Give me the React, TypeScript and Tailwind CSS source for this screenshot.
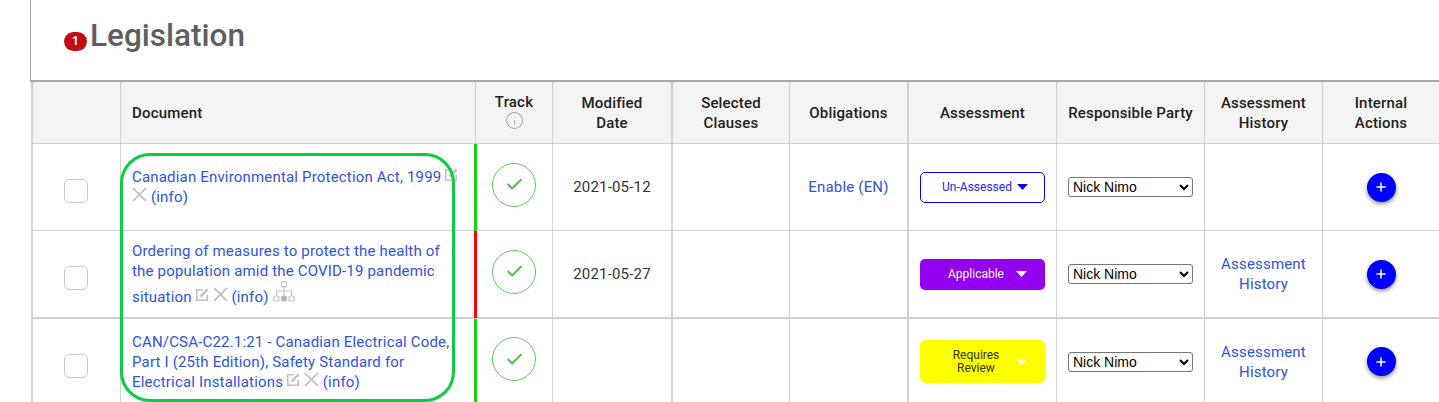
import { Check, Info, Plus } from "lucide-react";

const headers = [
  { label: "", cls: "" },
  { label: "Document", cls: "text-left pl-[11px]" },
  { label: "Track", cls: "pb-[3px]" },
  { label: "Modified Date", cls: "border-r-2 px-[12px]" },
  { label: "Selected Clauses", cls: "" },
  { label: "Obligations", cls: "border-r-2" },
  { label: "Assessment", cls: "" },
  { label: "Responsible Party", cls: "" },
  { label: "Assessment History", cls: "" },
  { label: "Internal Actions", cls: "border-r-0" },
];

function EditIcon() {
  return (
    <svg className="inline-block align-baseline -ml-[1px]" width="14" height="14" viewBox="0 0 14 14" fill="none" stroke="#c2c2c2">
      <path d="M8 1.75H1.75V12.25H12.25V6.5" strokeWidth="1.6" />
      <path d="M5.5 8.7L12.6 1.4" strokeWidth="2.4" />
    </svg>
  );
}

function CloseIcon() {
  return (
    <svg className="inline-block align-baseline" width="15" height="15" viewBox="0 0 15 15" fill="none" stroke="#bdbdbd" strokeWidth="1.7">
      <path d="M1 1L14 14M14 1L1 14" />
    </svg>
  );
}

function TreeIcon() {
  return (
    <svg className="inline-block align-baseline" width="22" height="21" viewBox="0 0 22 21" fill="none" stroke="#c4c4c4" strokeWidth="1.2">
      <rect x="8.5" y="0.6" width="5" height="5" rx="1" />
      <path d="M11 5.6V10M3.5 14.5V10H18.5V14.5M11 10V14.5" />
      <rect x="1" y="15" width="5" height="5" rx="1.2" />
      <rect x="8.5" y="15" width="5" height="5" rx="1" fill="#b5b5b5" />
      <rect x="16" y="15" width="5" height="5" rx="1.2" />
    </svg>
  );
}

function Caret({ color }: { color: string }) {
  return (
    <svg width="11" height="6" viewBox="0 0 11 6" className="shrink-0">
      <path d="M0 0H11L5.5 6Z" fill={color} />
    </svg>
  );
}

function AssessmentButton({ label, cls, caret, tall }: { label: string; cls: string; caret: string; tall?: boolean }) {
  return (
    <div className={`mx-auto w-[125px] rounded-[5px] flex items-center text-[12px] leading-[13px] tracking-normal ${tall ? "h-[43px]" : "h-[31px]"} ${cls}`}>
      <span className="w-[96px] pl-[16px] text-center">{label}</span>
      <Caret color={caret} />
    </div>
  );
}

function PartySelect() {
  return (
    <select
      defaultValue="Nick Nimo"
      className="block mx-auto w-[125px] h-[20px] border border-[#767676] rounded-[3px] bg-white text-black text-[14px] tracking-normal font-['Liberation_Sans',sans-serif]"
    >
      <option>Nick Nimo</option>
    </select>
  );
}

function AddButton() {
  return (
    <div className="mx-auto w-[29px] h-[29px] rounded-full bg-[#0000ff] flex items-center justify-center shadow-[0_2px_4px_rgba(0,0,0,0.45)]">
      <Plus className="w-[14px] h-[14px] text-white" strokeWidth={2.6} />
    </div>
  );
}

function Row({
  doc,
  bar,
  date,
  obligations,
  history,
  assessment,
  height,
  bottom = "border-b",
}: {
  doc: React.ReactNode;
  bar: string;
  date?: string;
  obligations?: string;
  history?: boolean;
  assessment: React.ReactNode;
  height: string;
  bottom?: string;
}) {
  const cell = `border-r ${bottom} border-[#d0d0d0] text-center align-middle`;
  return (
    <tr className={height}>
      <td className={`${cell} border-l-2`}>
        <div className="ml-[31px] mt-[8px] w-[24px] h-[24px] rounded-[5px] border border-[#cccccc] bg-white" />
      </td>
      <td className={`${cell} text-left pl-[11px] pr-[14px] text-[#2f52e4]`}>{doc}</td>
      <td className={`${cell} relative`}>
        <span className={`absolute left-[-2px] top-0 bottom-[-1px] w-[3px] ${bar}`} />
        <div className="mx-auto mb-[5px] w-[44px] h-[44px] rounded-full border border-[#63c663] flex items-center justify-center">
          <Check className="w-[19px] h-[19px] text-[#4ec04f]" strokeWidth={2.5} />
        </div>
      </td>
      <td className={`${cell} border-r-2 text-[#333333]`}>{date}</td>
      <td className={cell} />
      <td className={`${cell} border-r-2 text-[#2f52e4]`}>{obligations}</td>
      <td className={cell}>{assessment}</td>
      <td className={cell}>
        <PartySelect />
      </td>
      <td className={`${cell} text-[#2f52e4]`}>
        {history && (
          <>
            Assessment
            <br />
            History
          </>
        )}
      </td>
      <td className={`${cell} border-r-0`}>
        <AddButton />
      </td>
    </tr>
  );
}

export default function App() {
  return (
    <div className="relative w-[1439px] h-[402px] overflow-hidden bg-white font-['Roboto',sans-serif] text-[15px] leading-[20px] tracking-[0.18px]">
      <div className="ml-[30px] h-[82px] border-l border-b-2 border-[#a8a8a8] flex items-start pl-[33px] pt-[16px]">
        <span className="mt-[16px] w-[23px] h-[19px] rounded-full bg-[#c20c12] text-white text-[12px] leading-[19px] font-bold text-center tracking-normal">
          1
        </span>
        <h1 className="ml-[3px] text-[31.5px] leading-[40px] font-medium tracking-normal text-[#5f5f5f]">Legislation</h1>
      </div>
      <table className="ml-[31px] w-[1408px] table-fixed border-separate border-spacing-0">
        <colgroup>
          <col className="w-[90px]" />
          <col className="w-[355px]" />
          <col className="w-[77px]" />
          <col className="w-[120px]" />
          <col className="w-[117px]" />
          <col className="w-[119px]" />
          <col className="w-[148px]" />
          <col className="w-[148px]" />
          <col className="w-[118px]" />
          <col className="w-[116px]" />
        </colgroup>
        <thead>
          <tr className="h-[62px] bg-[#f4f4f4]">
            {headers.map((h, i) => (
              <th
                key={i}
                className={`border-r border-b border-[#d0d0d0] px-[10px] font-medium text-[#212121] text-center ${i === 0 ? "border-l-2" : ""} ${h.cls}`}
              >
                {h.label}
                {h.label === "Track" && <Info className="mx-auto -mt-[1px] w-[19px] h-[19px] text-[#a8a8a8]" strokeWidth={1.3} />}
              </th>
            ))}
          </tr>
        </thead>
        <tbody>
          <Row
            height="h-[87px]"
            bar="bg-[#0fd60f]"
            date="2021-05-12"
            obligations="Enable (EN)"
            assessment={<AssessmentButton label="Un-Assessed" cls="border border-[#0000ff] text-[#2424f0]" caret="#0000ff" />}
            doc={
              <>
                Canadian Environmental Protection Act, 1999 <EditIcon /> <CloseIcon /> (info)
              </>
            }
          />
          <Row
            height="h-[88px]"
            bottom="border-b-2"
            bar="bg-[#ff0000]"
            date="2021-05-27"
            history
            assessment={<AssessmentButton label="Applicable" cls="bg-[#9400ee] text-white" caret="#ffffff" />}
            doc={
              <>
                Ordering of measures to protect the health of the population amid the COVID-19 pandemic situation <EditIcon />{" "}
                <CloseIcon /> (info) <TreeIcon />
              </>
            }
          />
          <Row
            height="h-[86px]"
            bar="bg-[#0fd60f]"
            history
            assessment={<AssessmentButton label="Requires Review" tall cls="bg-[#ffff00] text-[#333300]" caret="#ffffff" />}
            doc={
              <>
                CAN/CSA-C22.1:21 - Canadian Electrical Code, Part I (25th Edition), Safety Standard for Electrical Installations{" "}
                <EditIcon /> <CloseIcon /> (info)
              </>
            }
          />
        </tbody>
      </table>
      <div className="absolute left-[120px] top-[153px] w-[335px] h-[249px] rounded-[30px] border-[3.5px] border-[#0dcb45]" />
    </div>
  );
}
